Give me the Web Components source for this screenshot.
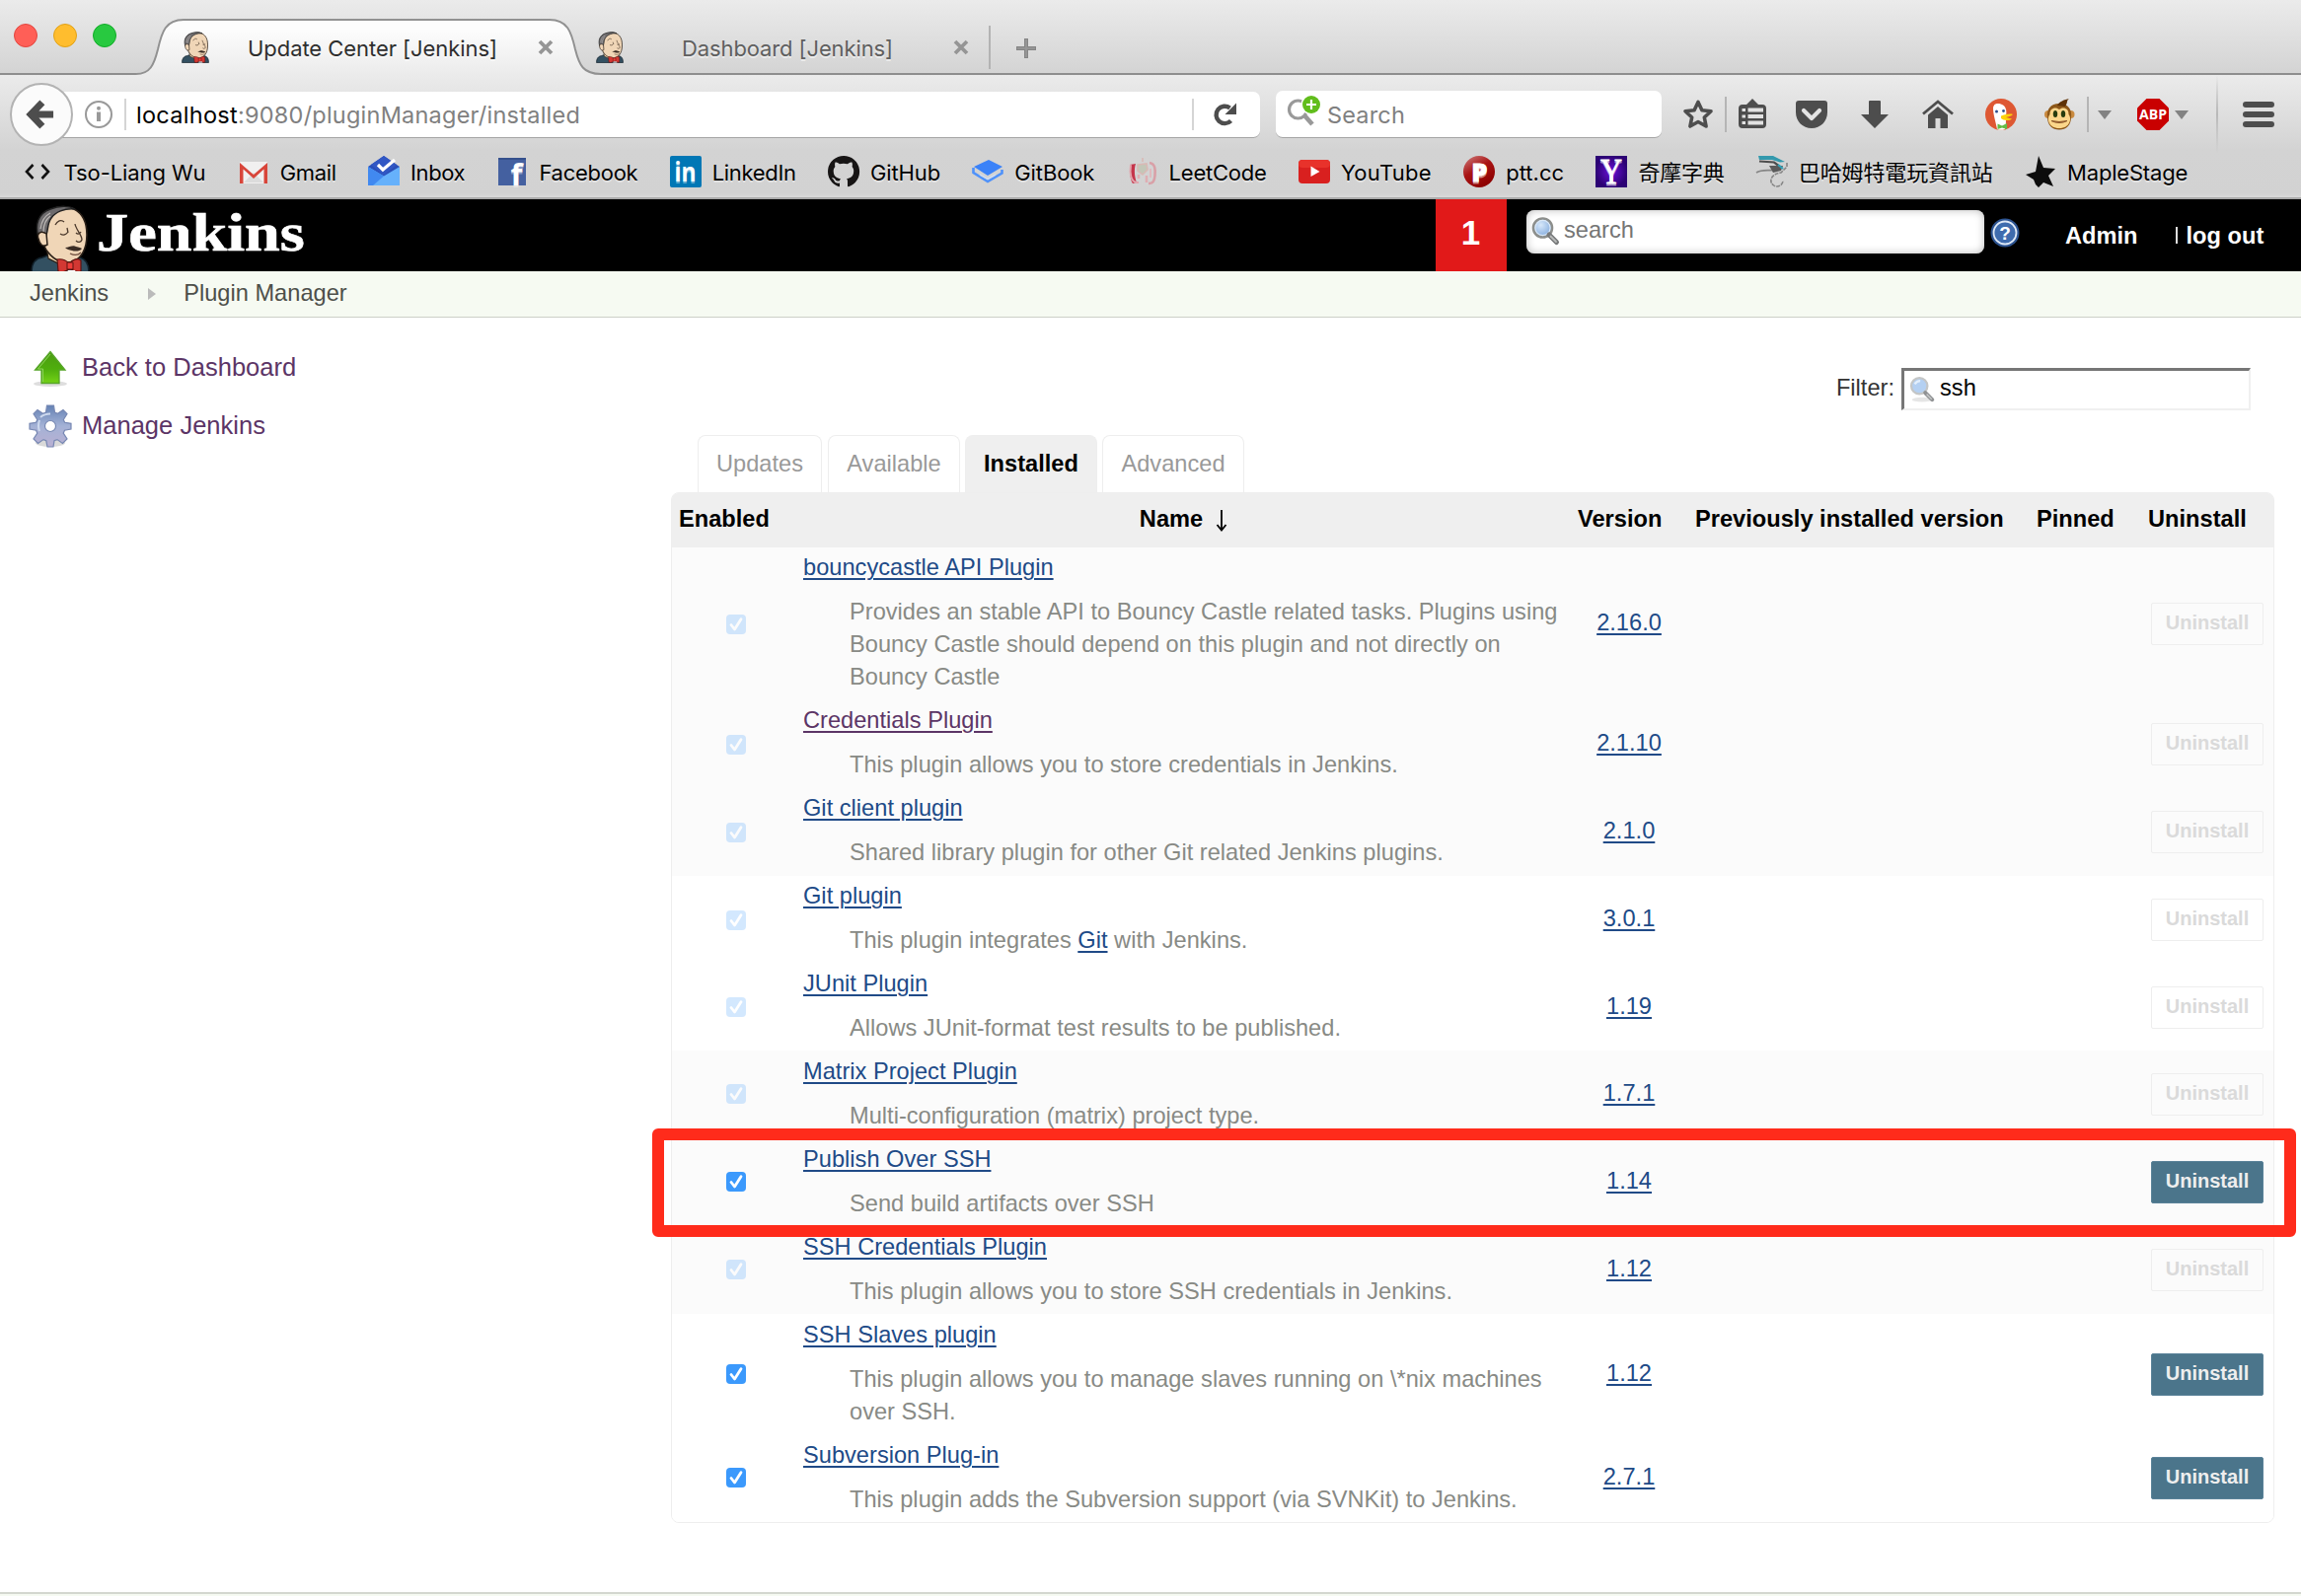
<!DOCTYPE html>
<html lang="en">
<head>
<meta charset="utf-8">
<title>Update Center [Jenkins]</title>
<style>
html,body{margin:0;padding:0}
body{width:2332px;height:1618px;overflow:hidden;background:#fff;font-family:"Liberation Sans",Arial,sans-serif;font-size:23.6px}
</style>
</head>
<body>
<browser-window>
  <tab-strip slot="tabs">
    <browser-tab active label="Update Center [Jenkins]" w="253"></browser-tab>
    <browser-tab label="Dashboard [Jenkins]" w="214"></browser-tab>
  </tab-strip>
  <nav-bar slot="nav"></nav-bar>
  <bookmark-bar slot="marks">
    <book-mark icon="code" w="144">Tso-Liang Wu</book-mark>
    <book-mark icon="gmail" w="57">Gmail</book-mark>
    <book-mark icon="inbox" w="55">Inbox</book-mark>
    <book-mark icon="facebook" w="100">Facebook</book-mark>
    <book-mark icon="linkedin" w="85">LinkedIn</book-mark>
    <book-mark icon="github" w="71">GitHub</book-mark>
    <book-mark icon="gitbook" w="81">GitBook</book-mark>
    <book-mark icon="leetcode" w="99">LeetCode</book-mark>
    <book-mark icon="youtube" w="92">YouTube</book-mark>
    <book-mark icon="ptt" w="59">ptt.cc</book-mark>
    <book-mark icon="yahoo" w="87">奇摩字典</book-mark>
    <book-mark icon="dragon" w="197">巴哈姆特電玩資訊站</book-mark>
    <book-mark icon="maple" w="122">MapleStage</book-mark>
  </bookmark-bar>
  <jenkins-page>
    <jenkins-header slot="header"></jenkins-header>
    <bread-crumbs slot="crumbs"></bread-crumbs>
    <side-link slot="side" icon="up">Back to Dashboard</side-link>
    <side-link slot="side" icon="gear">Manage Jenkins</side-link>
    <filter-box slot="main"></filter-box>
    <page-tabs slot="main"></page-tabs>
    <plugin-table slot="main">
      <plugin-row shade height="155" name="bouncycastle API Plugin" version="2.16.0">Provides an stable API to Bouncy Castle related tasks. Plugins using<br>Bouncy Castle should depend on this plugin and not directly on<br>Bouncy Castle</plugin-row>
      <plugin-row shade visited name="Credentials Plugin" version="2.1.10">This plugin allows you to store credentials in Jenkins.</plugin-row>
      <plugin-row shade name="Git client plugin" version="2.1.0">Shared library plugin for other Git related Jenkins plugins.</plugin-row>
      <plugin-row name="Git plugin" version="3.0.1">This plugin integrates <a>Git</a> with Jenkins.</plugin-row>
      <plugin-row height="88" name="JUnit Plugin" version="1.19">Allows JUnit-format test results to be published.</plugin-row>
      <plugin-row shade low name="Matrix Project Plugin" version="1.7.1">Multi-configuration (matrix) project type.</plugin-row>
      <plugin-row shade low removable marked name="Publish Over SSH" version="1.14">Send build artifacts over SSH</plugin-row>
      <plugin-row shade low name="SSH Credentials Plugin" version="1.12">This plugin allows you to store SSH credentials in Jenkins.</plugin-row>
      <plugin-row low removable height="122" name="SSH Slaves plugin" version="1.12">This plugin allows you to manage slaves running on \*nix machines<br>over SSH.</plugin-row>
      <plugin-row low removable name="Subversion Plug-in" version="2.7.1">This plugin adds the Subversion support (via SVNKit) to Jenkins.</plugin-row>
    </plugin-table>
  </jenkins-page>
</browser-window>
<script>
const UI='Inter,"Noto Sans CJK TC",sans-serif';
const SANS='"Liberation Sans",Arial,sans-serif';

/* name: [width, height, svg content]; the drawing box equals the pixel size unless a viewBox is given */
const butler=`<path d="M1 68C1 60 4 54 12 53L20 50L50 53C57 55 59 60 59 68Z" fill="#335061" stroke="#11202a" stroke-width="1.5"/>
<path d="M16 42L18 54L34 62L44 58L50 46Z" fill="#eed3ad" stroke="#2a2018" stroke-width="1.2"/>
<path d="M14 14C20 3 34 0 44 4C54 9 57 18 57 30C57 42 53 52 44 57C34 60 24 56 18 48C12 42 10 28 14 14Z" fill="#f0d6b7" stroke="#2a2018" stroke-width="1.6"/>
<path d="M8 32C4 20 8 8 20 4C30 0 40 1 45 4C34 3 25 7 21 13C17 18 18 24 16 30Z" fill="#6d6b6d" stroke="#222" stroke-width="1.5"/>
<path d="M10 24C11 16 14 11 20 8M13 27C13 20 16 14 20 11" stroke="#bdb9b6" stroke-width="1.2" fill="none"/>
<path d="M16 29C10 25 6 29 8 34C9 39 12 43 17 40Z" fill="#f0d6b7" stroke="#2a2018" stroke-width="1.5"/>
<path d="M25 20C27 16 31 14 34 17M30 29C33 31 36 30 38 27M37 23L38 28M46 28C48 30 50 29 51 27M45 19C46 25 52 30 52 35C51 38 48 38 46 36" fill="none" stroke="#4a382b" stroke-width="1.3"/>
<path d="M35 43C39 43 43 40 46 42C49 43 51 43 52 44C50 47 45 47 42 46C39 45 37 45 35 43Z" fill="#3b2c24"/><path d="M40 49C44 51 48 51 51 48" stroke="#6b4a3a" stroke-width="1.3" fill="none"/>
<path d="M27 55C32 54 36 56 39 59C43 55 48 53 51 56L51 67C47 68 43 67 40 64C36 67 31 69 28 67Z" fill="#d33833" stroke="#5a1411" stroke-width="1.2"/><path d="M37 58L43 58L43 65L37 65Z" fill="#ef3d3a" stroke="#5a1411"/><path d="M38 66L45 66L46 68H37Z" fill="#fff"/>`;
const lens=`<circle cx="11.5" cy="12" r="9.5" fill="url(#lg)" stroke="#8d8f8c" stroke-width="2.6"/><circle cx="11.5" cy="12" r="7.6" fill="none" stroke="#dbe8f6" stroke-width="1.2"/><path d="M18 19L25.5 26.5" stroke="#77797a" stroke-width="5" stroke-linecap="round"/><path d="M19.5 20.5L25 26" stroke="#b9bbba" stroke-width="1.8" stroke-linecap="round"/><defs><radialGradient id="lg" cx=".4" cy=".35"><stop offset="0" stop-color="#d7e8fa"/><stop offset="1" stop-color="#96b9e4"/></radialGradient></defs>`;
const lensPale=`<ellipse cx="14" cy="26" rx="11" ry="2.500" fill="#000" opacity=".1"/><circle cx="11" cy="11" r="8.800" fill="#b4d0f2" stroke="#c4c6c6" stroke-width="2.400"/><path d="M6 9Q8 5.500 12 5.500" stroke="#e3effc" stroke-width="2.500" fill="none"/><path d="M17.500 18.500L25 26" stroke="#909294" stroke-width="4.400" stroke-linecap="round"/><path d="M19 20L24.500 25.500" stroke="#c3c5c5" stroke-width="1.600"/>`;
const G='#4d4d4d';
const ICONS={
butler:[30,32,butler,'0 0 60 69'],
logo:[60,67,butler,'0 0 60 67'],
close:[16,16,`<path d="M2 2L14 14M14 2L2 14" stroke="#959595" stroke-width="3.8"/>`],
plus:[20,20,`<path d="M10 0V20M0 10H20" stroke="#858585" stroke-width="4"/><path d="M10 1V19M1 10H19" stroke="#999" stroke-width="1.6"/>`],
back:[30,32,`<path d="M17 3L4.500 16L17 29M5 16H29" stroke="${G}" stroke-width="7.5" fill="none" stroke-linejoin="miter"/><path d="M0 16L12 4L12 28Z" fill="${G}"/>`],
info:[30,30,`<circle cx="15" cy="15" r="13" fill="none" stroke="#999" stroke-width="2"/><circle cx="15" cy="8.800" r="2" fill="#999"/><path d="M15 12.500V22" stroke="#999" stroke-width="4"/>`],
reload:[24,24,`<path d="M17.5 18.500A8.700 8.700 0 1 1 16.500 5.500" fill="none" stroke="${G}" stroke-width="4.4"/><path d="M23 .5V12H11.500Z" fill="${G}"/>`],
find:[36,36,`<circle cx="11.500" cy="16" r="9" fill="none" stroke="#999" stroke-width="3.2"/><path d="M18 22L26 31" stroke="#999" stroke-width="4.6"/><circle cx="25" cy="11" r="10.500" fill="#fff"/><circle cx="25" cy="11" r="9" fill="#61bd1c"/><path d="M25 6V16M20 11H30" stroke="#fff" stroke-width="2.2"/>`],
star:[32,32,`<path d="M16 3.400L19.900 11.700L29 12.800L22.300 19L24.100 28L16 23.500L7.900 28L9.700 19L3 12.800L12.100 11.700Z" fill="none" stroke="${G}" stroke-width="3.600" stroke-linejoin="round"/>`],
list:[28,32,`<path d="M8 6L14 0L20 6H24Q28 6 28 10V26Q28 30 24 30H4Q0 30 0 26V10Q0 6 4 6Z" fill="${G}"/><path d="M9.500 11.500H25M9.500 18H25M9.500 24.500H25" stroke="#e2e2e2" stroke-width="3.8"/><path d="M3.500 11.500H7M3.500 18H7M3.500 24.500H7" stroke="#e2e2e2" stroke-width="3"/>`],
pocket:[32,28,`<path d="M3 0H29Q32 0 32 3V12C32 21 25 28 16 28S0 21 0 12V3Q0 0 3 0Z" fill="${G}"/><path d="M8 10L16 18L24 10" fill="none" stroke="#e4e4e4" stroke-width="4.2" stroke-linecap="round" stroke-linejoin="round"/>`],
down:[28,28,`<path d="M8 1Q8 0 9 0H19Q20 0 20 1V14H28L14 28L0 14H8Z" fill="${G}"/>`],
home:[32,30,`<path d="M1 14.500L16 2L31 14.500" fill="none" stroke="${G}" stroke-width="2.800"/><path d="M6 15.500L16 7L26 15.500V29H18.500V19H13.500V29H6Z" fill="${G}"/>`],
duck:[32,32,`<circle cx="16" cy="16" r="16" fill="#de5833"/><path d="M8 10C8 5 13 4 17 6C21 8 22 12 21 17C21 23 21 28 20 31C17 32.300 14 32 12 31C11 25 8 16 8 10Z" fill="#fff"/><path d="M9 6L15 5L12 9Z" fill="#fff"/><circle cx="11.500" cy="13" r="1.500" fill="#2d4f8e"/><circle cx="18.500" cy="12.500" r="1.400" fill="#2d4f8e"/><path d="M16 17.500C20 15.500 26 15 28 16C26 18 23 18.500 21 19C24 20 26 20 27 20.500C24 23 18 22 16 20Z" fill="#fdd20a"/><path d="M12.500 25.500L17 27.500L22 25V31L17 29.500L12.500 31Z" fill="#65bc46"/>`],
monkey:[30,32,`<circle cx="4" cy="16" r="4" fill="#c98a3f"/><circle cx="26.500" cy="16" r="4" fill="#c98a3f"/><path d="M15 5C24 5 28 11 27 19C27 27 22 31.500 15 31.500S3 27 3 19C2 11 6 5 15 5Z" fill="#8d5718"/><path d="M13 7C15 3 20 1 25 0C22 2 24 4 21 8Z" fill="#5e3206"/><path d="M15 11C18 8 25 9 24.500 16C28 20 26 30 15 30S2 20 5.500 16C5 9 12 8 15 11Z" fill="#fbd68a"/><ellipse cx="11" cy="15.500" rx="2.200" ry="3.500" fill="#263c0e"/><ellipse cx="19" cy="15.500" rx="2.200" ry="3.500" fill="#263c0e"/><path d="M7 22.500Q15 24.500 23 22.500Q15 26.500 7 22.500Z" fill="#b84b2b" stroke="#8d5a2b"/>`],
tri:[14,9,`<path d="M0 0H14L7 9Z" fill="#828282"/>`],
abp:[32,32,`<path d="M9.500 0H22.500L32 9.500V22.500L22.500 32H9.500L0 22.500V9.500Z" fill="#c90000"/><text x="16" y="21.300" text-anchor="middle" font-family="Open Sans,sans-serif" font-weight="700" font-size="14.500" textLength="28" lengthAdjust="spacingAndGlyphs" fill="#fff">ABP</text>`],
menu:[32,26,`<path d="M3 3H29M3 13H29M3 23H29" stroke="${G}" stroke-width="6" stroke-linecap="round"/>`],
code:[32,32,`<path d="M11.500 9L5 16L11.500 23M20.500 9L27 16L20.500 23" fill="none" stroke="#111" stroke-width="2.600"/>`],
gmail:[32,32,`<path d="M2 6H30V28H2Z" fill="#f1f0f0"/><path d="M6 27L16 17L26 27Z" fill="#dcdcdc"/><path d="M2 28V7L16 19L30 7V28H26.500V13.500L16 23L5.500 13.500V28Z" fill="#d8453a"/>`],
inbox:[32,32,`<path d="M0 11L16 0L32 11V28H0Z" fill="#2a4fb8"/><path d="M16 0L29 9L16 20L3 9Z" fill="#3157c4"/><path d="M10 9L15 14L27 4" fill="none" stroke="#fff" stroke-width="3.200"/><path d="M0 11L16 20.500L32 11V30H0Z" fill="#66b1fb"/><path d="M0 11L16 20.500L5 30H0Z" fill="#4189f0"/>`],
facebook:[32,32,`<path d="M2 2H30V30H2Z" fill="#4460a0"/><path d="M2 2H30V4H2Z" fill="#35508c"/><text x="20.500" y="29.500" text-anchor="middle" font-family="Open Sans,sans-serif" font-weight="700" font-size="31" fill="#fff">f</text>`],
linkedin:[32,32,`<rect width="32" height="32" rx="2" fill="#0077b5"/><text x="15.500" y="26" text-anchor="middle" font-family="Open Sans,sans-serif" font-weight="700" font-size="26" textLength="22" lengthAdjust="spacingAndGlyphs" fill="#fff">in</text>`],
github:[32,32,`<path fill-rule="evenodd" d="M16 0A16 16 0 0 0 11 31.200C11.800 31.300 12 30.900 12 30.400V27.500C7.500 28.500 6.600 25.500 6.600 25.500C5.900 23.700 4.800 23.200 4.800 23.200C3.300 22.200 4.900 22.200 4.900 22.200C6.500 22.300 7.400 23.800 7.400 23.800C8.800 26.300 11.200 25.600 12 25.200C12.200 24.200 12.600 23.500 13 23.100C9.500 22.700 5.700 21.300 5.700 15.200C5.700 13.500 6.300 12 7.400 10.900C7.200 10.500 6.700 8.900 7.500 6.600C7.500 6.600 8.900 6.200 11.900 8.200A15 15 0 0 1 20 8.200C23 6.200 24.400 6.600 24.400 6.600C25.300 8.900 24.700 10.500 24.600 10.900C25.600 12 26.200 13.500 26.200 15.200C26.200 21.300 22.500 22.700 19 23C19.600 23.600 20 24.600 20 26.100V30.400C20 30.900 20.300 31.400 21.100 31.200A16 16 0 0 0 16 0Z" fill="#171515"/>`],
gitbook:[32,32,`<path d="M2 11L17 4L31 11L16 20Z" fill="#3b82f8"/><path d="M1.500 12V17L16 26L30.500 17.500V14" fill="none" stroke="#4f92fa" stroke-width="2.600"/><path d="M8 19L16 23.500L24 19" fill="none" stroke="#cfdcf0" stroke-width="1.500"/>`],
leetcode:[32,32,`<path d="M3 9L9 8C7 14 8 22 10 27L6 28C3 24 3 14 3 9Z" fill="#c5344a"/><path d="M4 9C3 16 3 28 12 27" fill="none" stroke="#e1a4ac" stroke-width="2"/><path d="M23 7C29 8 29 14 28.500 20C28 25 27 28 22 28" fill="none" stroke="#d9a0a7" stroke-width="2.600"/><path d="M24 13V22" stroke="#e0b9be" stroke-width="2"/><path d="M16 2V6M11 9L20 8L21 14L16 19L11 15Z" stroke="#d9b9b5" fill="#c3c7b8" stroke-width="1.600"/><path d="M20 20V27M12 19V23" stroke="#e0adb2" stroke-width="2.500"/>`],
youtube:[32,32,`<rect y="4" width="32" height="24" rx="4" fill="#d9201f"/><rect y="4" width="32" height="8" rx="4" fill="#e8322b"/><path d="M12.500 10.500L21.500 16L12.500 21Z" fill="#fff"/>`],
ptt:[32,32,`<defs><linearGradient id="pg" x1="0" y1="0" x2=".6" y2="1"><stop offset="0" stop-color="#cf8080"/><stop offset=".5" stop-color="#a91414"/><stop offset="1" stop-color="#8c0000"/></linearGradient></defs><circle cx="16" cy="16" r="16" fill="url(#pg)"/><text x="16.500" y="25.500" text-anchor="middle" font-family="Open Sans,sans-serif" font-weight="800" font-size="25" stroke="#fff" fill="#fff">P</text>`],
yahoo:[32,32,`<defs><radialGradient id="yg"><stop offset="0" stop-color="#6a10d8"/><stop offset="1" stop-color="#2c0274"/></radialGradient></defs><rect width="32" height="32" fill="url(#yg)"/><text x="16" y="27.500" text-anchor="middle" font-family="Liberation Serif,serif" font-size="35" textLength="22" lengthAdjust="spacingAndGlyphs" fill="#fff" stroke="#fff" stroke-width=".8">Y</text>`],
dragon:[32,32,`<path d="M2 0H17L29 6L24 6.500L16 4H3Z" fill="#3399ad"/><path d="M3 5.500L18 6.500L24 11" stroke="#4d4d4d" stroke-width="2.200" fill="none"/><path d="M0 17C5 13.500 11 15 17 14.500" fill="none" stroke="#858585" stroke-width="1.600"/><path d="M31 7V11L25 17C16 18 12 25 17 29.500C21 33 27 30 27 25" fill="none" stroke="#858585" stroke-width="1.600" stroke-dasharray="4 1"/><path d="M13 10L27 10L25 15L17 17Z" fill="#5b5b5b"/><path d="M22 9L27 13" stroke="#2fa3ba" stroke-width="2"/>`],
maple:[32,32,`<path d="M14 0L19 12L31 13L24 20L29 31L19 27L14 32L11 29L9 24L1 19L11 16Z" fill="#0c0c0c"/>`],
lens:[29,29,lens],
lensPale:[28,29,lensPale],
help:[30,30,`<circle cx="15" cy="15" r="14.500" fill="#2c5391"/><circle cx="15" cy="15" r="11.500" fill="#3f6cae" stroke="#dfe9f6" stroke-width="1.800"/><text x="15" y="22" text-anchor="middle" font-family="Liberation Sans,sans-serif" font-weight="700" font-size="19" fill="#fff">?</text>`],
up:[44,44,`<defs><linearGradient id="ug" x1="0" y1="0" x2="0" y2="1"><stop offset="0" stop-color="#4b9b12"/><stop offset=".55" stop-color="#4fae0d"/><stop offset="1" stop-color="#73d216"/></linearGradient></defs><ellipse cx="22" cy="38" rx="17" ry="3" fill="#000" opacity=".13"/><path d="M22 5.500L37 24H31V37.500H13V24H6.500Z" fill="url(#ug)" stroke="#57a52a" stroke-width="1.300"/><path d="M14.500 36V23H9.500L22 8" fill="none" stroke="#8ed55a" stroke-width="1"/>`],
gear:[44,44,`<defs><linearGradient id="gg" x1="0" y1="0" x2="0" y2="1"><stop offset="0" stop-color="#6482b4"/><stop offset=".5" stop-color="#a4b2d6"/><stop offset="1" stop-color="#b9b0d2"/></linearGradient></defs><ellipse cx="22" cy="39" rx="15" ry="4" fill="#000" opacity=".15"/><g fill="url(#gg)" stroke="#7788b3" stroke-width="1.200"><path fill-rule="evenodd" d="M18.500 1H25.500L26.500 8L29.500 9.300L35 5.500L39 9.500L35.300 15.500L36.600 18.300L43 19.300V25L36.500 26.200L35.200 29.200L39 35L34.500 39.500L29 35.600L26 36.800L25 43H19L17.800 36.800L15 35.600L9.500 39.500L5 35L8.800 29.200L7.600 26.200L1 25V19.300L7.500 18.300L8.800 15.500L5 9.500L9 5.500L14.500 9.300L17.500 8ZM22 16.500A5.500 5.500 0 1 0 22 27.500A5.500 5.500 0 1 0 22 16.500Z"/></g><path d="M12 13Q16 9.500 22 9.500M11 16Q9 22 11 27" stroke="#cdd9ee" stroke-width="2" fill="none"/>`],
check:[20,20,`<path d="M5 10.500L8.500 15L15 4.800" fill="none" stroke="#fff" stroke-width="2.800" stroke-linecap="round" stroke-linejoin="round"/>`]
};

function define(tag,html,setup){
  customElements.define(tag,class extends HTMLElement{
    connectedCallback(){
      if(this.shadowRoot)return;
      const t=document.createElement('template');
      t.innerHTML=typeof html==='function'?html(this):html;
      this.attachShadow({mode:'open'}).append(t.content.cloneNode(true));
      if(setup)setup(this);
    }
  });
}
const at=(e,n)=>e.getAttribute(n)||'';

define('ui-icon',e=>{
  const [w,h,body,vb]=ICONS[at(e,'name')];
  const W=+at(e,'w')||w,H=+at(e,'h')||h;
  /* small tiles may hold a letter whose line box is taller than the tile; the header logo is cropped by its bar */
  const clip=/logo|butler/.test(at(e,'name'))?'hidden':'visible';
  return `<style>:host{display:block;flex:none;width:${W}px;height:${H}px}svg{display:block;overflow:${clip}}</style><svg width="${W}" height="${H}" viewBox="${vb||`0 0 ${w} ${h}`}">${body}</svg>`;
});

/* one line of text, tracked so that it fills a given width */
define('fit-text',`<style>:host{display:block;flex:none;white-space:nowrap}span{display:inline-block}</style><span><slot></slot></span>`,e=>{
  const s=e.shadowRoot.querySelector('span'),w=+at(e,'w'),n=e.textContent.length;
  e.style.width=w+'px';
  s.style.letterSpacing=((w-s.getBoundingClientRect().width)/n).toFixed(3)+'px';
});

define('browser-window',`<style>:host{display:flex;flex-direction:column;width:2332px;height:1618px}
.bar{height:124px;background:linear-gradient(#ebebeb,#d3d3d3 76px,#d2d2d2 120px,#dadada);border-bottom:2px solid #aaa}</style>
<slot name="tabs"></slot><div class="bar"><slot name="nav"></slot><slot name="marks"></slot></div><slot></slot>`);

define('tab-strip',`<style>:host{display:flex;height:76px;background:linear-gradient(#ebebeb,#d3d3d3);box-shadow:inset 0 -2px #8e8e8e}
.lights{display:flex;gap:16px;padding:24px 20px 0 14px}
i{width:22px;height:22px;border-radius:50%;border:1px solid}
.r{background:#ff5f57;border-color:#e2463f}.y{background:#ffbd2e;border-color:#e1a116}.g{background:#28c940;border-color:#12ac28}
.sep{width:2px;height:44px;margin:26px 0 0 20px;background:#b3b3b3}.plus{margin:39px 0 0 26px}</style>
<div class="lights"><i class="r"></i><i class="y"></i><i class="g"></i></div><slot></slot><div class="sep"></div><ui-icon class="plus" name="plus"></ui-icon>`);

define('browser-tab',e=>{
  const on=e.hasAttribute('active');
  return `<style>:host{display:grid;height:76px;${on?'width:471px':'width:379px;margin-left:-6px'};font:22px/30px ${UI};color:${on?'#2e2e2e':'#5f5f5f'};text-shadow:0 2px rgba(255,255,255,.5)}
svg,.c{grid-area:1/1}.c{display:flex;align-items:center;padding:20px 0 0 ${on?45:0}px;height:56px}
fit-text{margin:1px ${on?41:61}px 0 ${on?38:58}px}</style>
${on?`<svg width="471" height="76"><defs><linearGradient id="t" x1="0" y1="0" x2="0" y2="1"><stop offset=".2" stop-color="#fcfcfc"/><stop offset="1" stop-color="#ebebeb"/></linearGradient></defs><path d="M0 76V75C14 75 18 66 22 50C26 32 30 20 48 20L419 20C437 20 441 32 445 50C449 66 453 75 471 75V76Z" fill="url(#t)"/><path d="M0 75C14 75 18 66 22 50C26 32 30 20 48 20L419 20C437 20 441 32 445 50C449 66 453 75 471 75" fill="none" stroke="#919191" stroke-width="2"/></svg>`:''}
<div class="c"><ui-icon name="butler"></ui-icon><fit-text w="${at(e,'w')}">${at(e,'label')}</fit-text><ui-icon name="close"></ui-icon></div>`;
});

define('nav-bar',`<style>:host{display:flex;align-items:center;height:80px;font:23.5px/32px ${UI}}
.back{display:flex;flex:none;align-items:center;justify-content:center;width:60px;height:60px;margin-left:10px;border:2px solid #b3b3b3;border-radius:50%;background:#fbfbfb;z-index:1}
.box{display:flex;align-items:center;height:47px;background:#fff;border-bottom:1px solid #a5a5a5;border-radius:0 7px 7px 0}
.url{width:1217px;margin-left:-14px;box-sizing:border-box;padding-left:25px}
.v{width:2px;height:32px;background:#d5d5d5;flex:none}.s{width:391px;margin-left:16px;border-radius:7px}
fit-text{padding-top:2px}
.h{color:#000}.p{color:#808080}
.t{height:36px;width:2px;background:#b5b5b5}
.fade{width:2px;height:80px;background:linear-gradient(transparent,#b8b8b8 50%,transparent);margin:0 25px 0 28px}</style>
<div class="back"><ui-icon name="back" w="28" h="30" style="margin-left:-2px"></ui-icon></div>
<div class="box url"><ui-icon name="info"></ui-icon><div class="v" style="margin:0 10px 0 11px"></div><fit-text class="h" w="103">localhost</fit-text><fit-text class="p" w="347">:9080/pluginManager/installed</fit-text><div class="v" style="margin:0 20px 0 620px"></div><ui-icon name="reload"></ui-icon></div>
<div class="box s"><ui-icon name="find" style="margin:-6px 5px 0 11px"></ui-icon><fit-text class="p" w="79">Search</fit-text></div>
<ui-icon name="star" style="margin-left:21px"></ui-icon><div class="t" style="margin:0 12px 0 11px"></div>
<ui-icon name="list"></ui-icon><ui-icon name="pocket" style="margin-left:30px"></ui-icon><ui-icon name="down" style="margin-left:34px"></ui-icon>
<ui-icon name="home" style="margin-left:34px"></ui-icon><ui-icon name="duck" style="margin-left:32px"></ui-icon><ui-icon name="monkey" style="margin-left:28px"></ui-icon>
<div class="t" style="margin:0 9px 0 13px"></div><ui-icon name="tri"></ui-icon><ui-icon name="abp" style="margin:0 6px 0 26px"></ui-icon><ui-icon name="tri"></ui-icon>
<div class="fade"></div><ui-icon name="menu"></ui-icon>`);

define('bookmark-bar',`<style>:host{display:flex;gap:32.300px;height:36px;padding-left:21.500px}</style><slot></slot>`);
define('book-mark',e=>`<style>:host{display:flex;align-items:center;gap:11px;font:22px/32px ${UI};color:#000;text-shadow:0 2px rgba(255,255,255,.4)}fit-text{padding-top:1px}</style><ui-icon name="${at(e,'icon')}"></ui-icon><fit-text w="${at(e,'w')}">${e.textContent}</fit-text>`);

define('jenkins-page',`<style>:host{display:flex;flex-direction:column;flex:1;background:#fff;font:23.6px/33px ${SANS};letter-spacing:.02px;color:#333}
.body{display:flex;height:1292px}.side{width:680px;padding-top:29px}.main{width:1625px;padding-top:51px}
.foot{height:2px;flex:1;border-top:2px solid #d3d7cf;background:#f6faf2}</style>
<slot name="header"></slot><slot name="crumbs"></slot><div class="body"><div class="side"><slot name="side"></slot></div><div class="main"><slot name="main"></slot></div></div><div class="foot"></div>`);

define('jenkins-header',`<style>:host{display:flex;height:73px;background:#000;color:#fff;font-weight:700}
.logo{display:flex;width:1424px;padding:6px 0 0 31px}
.word{font:700 54px/60px "Liberation Serif",serif;transform:scaleX(1.19);transform-origin:0 0;margin:-2px 0 0 7px;-webkit-text-stroke:.6px #fff}
.n{width:72px;height:73px;background:#e11919;font-size:35px;line-height:67px;text-align:center;text-indent:-1px}
.s{display:flex;align-items:center;box-sizing:border-box;width:464px;height:44px;margin:11px 6px 0 20px;padding-left:5px;border-radius:8px;background:#fff;box-shadow:inset 0 0 8px #bbb;color:#757575;font-weight:400}
.s span{margin:-4px 0 0 4px}
.a{margin:21px 0 0 46px;line-height:33px}.bar{width:2px;height:17px;background:#ddd;margin:28px 9px 0 38px}</style>
<div class="logo"><ui-icon name="logo"></ui-icon><div class="word">Jenkins</div></div><div class="n">1</div>
<div class="s"><ui-icon name="lens" style="margin-top:-3px"></ui-icon><span>search</span></div><ui-icon name="help" style="margin-top:19px"></ui-icon>
<div class="a">Admin</div><div class="bar"></div><div class="a" style="margin-left:0">log out</div>`);

define('bread-crumbs',`<style>:host{display:flex;height:46px;background:#f6faf2;border-bottom:1px solid #ccd0c8;color:#4d4f4a;line-height:44px;padding-left:30px}
i{width:0;height:0;border:solid transparent;border-width:6px 0 6px 8px;border-left-color:#bbb;margin:17px 28px 0 40px}</style><span>Jenkins</span><i></i><span>Plugin Manager</span>`);

define('side-link',e=>`<style>:host{display:flex;align-items:center;height:44px;margin-bottom:15px;padding-left:29px;font-size:25.5px;color:#5c3566}span{margin:-1px 0 0 10px}</style><ui-icon name="${at(e,'icon')}"></ui-icon><span><slot></slot></span>`);

define('filter-box',`<style>:host{display:flex;justify-content:flex-end;height:43px;padding-right:24px}
.l{line-height:40px;margin-right:7px}
.i{display:flex;align-items:center;box-sizing:border-box;width:354px;height:43px;border:solid;border-width:3px 2px 2px 3px;border-color:#767676 #f0f0f0 #f0f0f0 #767676;background:#fff;color:#000;padding-left:5px}
.i span{margin:-3px 0 0 5px}</style><span class="l">Filter:</span><div class="i"><ui-icon name="lensPale" w="26" h="27" style="margin-top:-1px"></ui-icon><span>ssh</span></div>`);

define('page-tabs',`<style>:host{display:flex;height:58px;margin-top:25px;padding-left:27px}
div{box-sizing:border-box;height:58px;border:1px solid #eee;border-bottom:0;border-radius:8px 8px 0 0;color:#999;line-height:56px;text-align:center;margin-right:6px}
.on{background:#efefef;color:#000;font-weight:700;margin-right:5px}</style>
<div style="width:126px">Updates</div><div style="width:134px;margin-right:5px">Available</div><div class="on" style="width:134px">Installed</div><div style="width:144px">Advanced</div>`);

define('plugin-table',`<style>:host{display:block;box-sizing:border-box;width:1625px;height:1045px;border:1px solid #eee;border-radius:8px;overflow:visible}
.h{display:grid;grid-template-columns:130px 775px 130px 347px 100px 1fr;height:55px;background:#efefef;color:#000;font-weight:700;line-height:53px;border-radius:6px 6px 0 0}
.n{display:flex;justify-content:center;gap:13px;padding-left:2px}svg{margin-top:17px}</style>
<div class="h"><span style="padding-left:7px">Enabled</span><span class="n">Name<svg width="12" height="22"><path d="M6 0V20M1.500 15L6 20.500L10.500 15" stroke="#000" stroke-width="1.800" fill="none"/></svg></span><span style="padding-left:13px">Version</span><span style="padding-left:2px">Previously installed version</span><span style="padding-left:1px">Pinned</span><span style="padding-left:14px">Uninstall</span></div><slot></slot>`);

define('plugin-row',e=>{
  const on=e.hasAttribute('removable');
  const h=+at(e,'height')||89;
  const low=e.hasAttribute('low')?1:0;
  return `<style>:host{display:grid;grid-template-columns:130px 775px 130px 447px 1fr;height:${h}px;background:${e.hasAttribute('shade')?'#fbfbfb':'#fff'};align-items:center;position:relative}
:host(:last-child){border-radius:0 0 7px 7px}
.c{width:20px;height:20px;margin:${low?-1:0}px 0 0 55px;border-radius:4px;background:#3b99fc;${on?'':'opacity:.22'}}
.n{align-self:start;padding:${4+low}px 0 0 3px}.t,.v,::slotted(a){text-decoration:underline;text-decoration-thickness:1.500px;text-underline-offset:3px;color:#204a87}
.t{display:block;width:max-content;${e.hasAttribute('visited')?'color:#5c3566':''}}
.d{margin:12px 0 0 47px;color:#888a85;line-height:32.800px;white-space:nowrap}
.v{justify-self:center;margin-top:-2px}
.b{grid-column:5;box-sizing:border-box;width:114px;height:43px;margin-left:17px;border:1px solid ${on?'#5a8299':'#eee'};border-radius:2px;background:${on?'#4b758b':'transparent'};color:${on?'#eee':'#dadada'};font-weight:700;font-size:20px;letter-spacing:0;line-height:38px;text-align:center}
.m{position:absolute;left:-20px;top:-10.500px;width:1642px;height:86px;border:12px solid #ff2b1b;border-radius:6px;z-index:2}</style>
<div class="c"><ui-icon name="check"></ui-icon></div><div class="n"><span class="t">${at(e,'name')}</span><div class="d"><slot></slot></div></div><span class="v">${at(e,'version')}</span><div class="b">Uninstall</div>${e.hasAttribute('marked')?'<div class="m"></div>':''}`;
});
</script>
</body>
</html>
